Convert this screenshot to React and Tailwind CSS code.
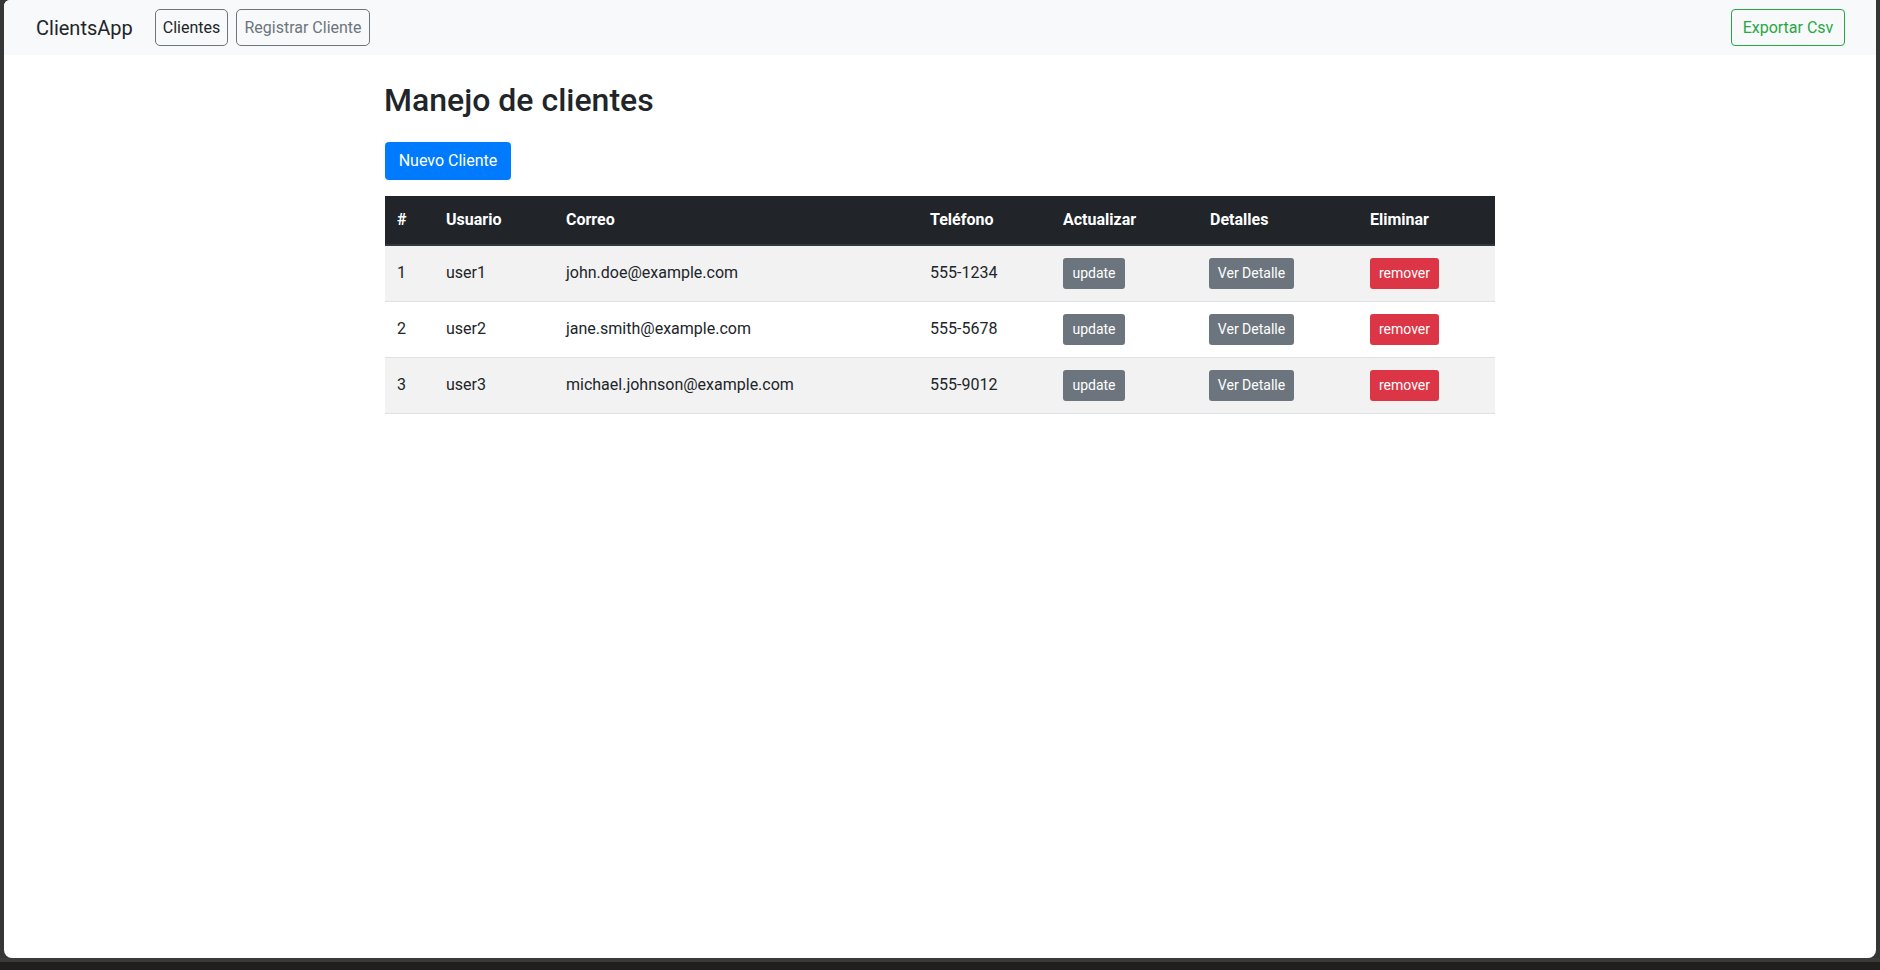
import React from "react";

const rows = [
  { id: 1, user: "user1", email: "john.doe@example.com", phone: "555-1234" },
  { id: 2, user: "user2", email: "jane.smith@example.com", phone: "555-5678" },
  { id: 3, user: "user3", email: "michael.johnson@example.com", phone: "555-9012" },
];

export default function App() {
  return (
    <div className="w-[1880px] h-[970px] bg-[#363636] flex flex-col font-['Roboto',sans-serif] text-[#212529] overflow-hidden">
      <div className="flex h-[958px]">
        <div className="w-[4px] bg-[#363636]" />
        <div className="flex-1 bg-white rounded-tl-[6px] rounded-bl-[8px] rounded-br-[8px] overflow-hidden flex flex-col">
          {/* Navbar */}
          <nav className="h-[55px] bg-[#f8f9fa] flex items-center pl-[32px] pr-[31px]">
            <span className="text-[20px] leading-[30px] text-[#212529] w-[119px]">ClientsApp</span>
            <div className="flex gap-[8px]">
              <button className="h-[37px] w-[73px] border border-[#6c757d] rounded-[5px] text-[16px] text-[#212529]">Clientes</button>
              <button className="h-[37px] w-[134px] border border-[#6c757d] rounded-[5px] text-[16px] text-[#6c757d]">Registrar Cliente</button>
            </div>
            <div className="flex-1" />
            <button className="h-[37px] w-[114px] border border-[#28a745] rounded-[4px] text-[16px] text-[#28a745]">Exportar Csv</button>
          </nav>

          {/* Content */}
          <div className="w-[1110px] mx-auto pt-[26px]">
            <h2 className="text-[32px] leading-[38px] font-medium mb-[23px] -ml-[1px]">Manejo de clientes</h2>
            <button className="h-[38px] w-[126px] bg-[#007bff] text-white rounded-[4px] text-[16px]">Nuevo Cliente</button>
            <table className="w-[1110px] table-fixed border-collapse mt-[16px] text-[16px]">
              <thead>
                <tr className="bg-[#212529] text-white">
                  <th className="w-[49px] h-[49px] px-[12px] text-left font-bold border-b-2 border-[#32383e]">#</th>
                  <th className="w-[120px] px-[12px] text-left font-bold border-b-2 border-[#32383e]">Usuario</th>
                  <th className="w-[364px] px-[12px] text-left font-bold border-b-2 border-[#32383e]">Correo</th>
                  <th className="w-[133px] px-[12px] text-left font-bold border-b-2 border-[#32383e]">Teléfono</th>
                  <th className="w-[147px] px-[12px] text-left font-bold border-b-2 border-[#32383e]">Actualizar</th>
                  <th className="w-[160px] px-[12px] text-left font-bold border-b-2 border-[#32383e]">Detalles</th>
                  <th className="w-[137px] px-[12px] text-left font-bold border-b-2 border-[#32383e]">Eliminar</th>
                </tr>
              </thead>
              <tbody>
                {rows.map((r, i) => (
                  <tr key={r.id} className={`${i % 2 === 0 ? "bg-[#f2f2f2]" : "bg-white"} border-b border-[#dee2e6]`}>
                    <td className="h-[56px] px-[12px] align-middle">{r.id}</td>
                    <td className="px-[12px]">{r.user}</td>
                    <td className="px-[12px]">{r.email}</td>
                    <td className="px-[12px]">{r.phone}</td>
                    <td className="px-[12px]">
                      <button className="h-[31px] w-[62px] bg-[#6c757d] text-white text-[14px] rounded-[3px]">update</button>
                    </td>
                    <td className="px-[11px]">
                      <button className="h-[31px] w-[85px] bg-[#6c757d] text-white text-[14px] rounded-[3px]">Ver Detalle</button>
                    </td>
                    <td className="px-[12px]">
                      <button className="h-[31px] w-[69px] bg-[#dc3545] text-white text-[14px] rounded-[3px]">remover</button>
                    </td>
                  </tr>
                ))}
              </tbody>
            </table>
          </div>
        </div>
        <div className="w-[4px] bg-[#363636]" />
      </div>
      <div className="h-[4px] bg-[#3b3b3b]" />
      <div className="flex-1 bg-[#211f1d]" />
    </div>
  );
}
